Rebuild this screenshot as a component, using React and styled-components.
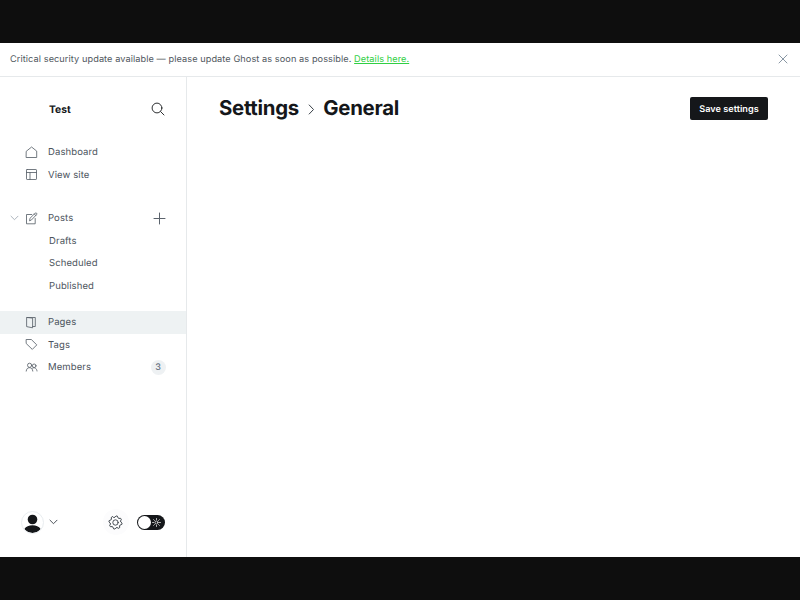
import React from 'react';
import styled, { createGlobalStyle } from 'styled-components';

const GlobalStyle = createGlobalStyle`
  * { box-sizing: border-box; }
  body { margin: 0; background: #0e0e0e; font-family: Inter, sans-serif; text-rendering: geometricPrecision; }
  svg { display: block; fill: none; stroke: currentColor; stroke-linecap: round; stroke-linejoin: round; flex: none; }
`;

const Screen = styled.div`
  height: 600px;
  padding: 43px 0;
  background: #0e0e0e;
`;
const Window = styled.div`
  height: 514px;
  display: flex;
  flex-direction: column;
  background: #fff;
  color: #15171a;
`;
const Banner = styled.div`
  height: 34px;
  flex: none;
  display: flex;
  align-items: center;
  justify-content: space-between;
  padding: 0 12px 1px 10px;
  border-bottom: 1px solid #e6e9eb;
  font-size: 9.2px;
  letter-spacing: 0.07px;
  color: #515860;
  white-space: nowrap;
`;
const BannerText = styled.span`
  padding-top: 1px;
`;
const BannerLink = styled.a`
  color: #30cf43;
  text-decoration: underline;
`;
const CloseButton = styled.span`
  color: #7c8b9a;
`;
const Body = styled.div`
  flex: 1;
  display: flex;
  min-height: 0;
`;
const Sidebar = styled.nav`
  width: 187px;
  flex: none;
  display: flex;
  flex-direction: column;
  border-right: 1px solid #e6e9eb;
  padding-bottom: 22px;
`;
const SiteHeader = styled.div`
  height: 64px;
  display: flex;
  align-items: center;
  justify-content: space-between;
  padding: 0 21px 0 49px;
  font-size: 10.3px;
  font-weight: 700;
`;
const SiteName = styled.span`
  padding-top: 2px;
`;
const Group = styled.div`
  margin-bottom: ${(p) => p.$gap}px;
`;
const Row = styled.div`
  height: 22.5px;
  display: flex;
  align-items: center;
  padding: 0 20.5px 0 ${(p) => (p.$nested ? 49 : 10)}px;
  font-size: 9.5px;
  letter-spacing: 0.1px;
  color: #4c545d;
  background: ${(p) => (p.$active ? '#eef2f3' : 'transparent')};
`;
const Expander = styled.span`
  width: 15px;
  color: #a4adb6;
`;
const RowIcon = styled.span`
  width: 23px;
  color: #5b636c;
`;
const Label = styled.span`
  flex: 1;
  padding-top: 1px;
`;
const Count = styled.span`
  width: 15px;
  height: 15px;
  border-radius: 50%;
  display: grid;
  place-items: center;
  padding-top: 1px;
  background: #eef1f3;
  color: #657080;
  font-size: 9px;
  font-weight: 500;
  letter-spacing: 0;
`;
const AddIcon = styled.span`
  color: #5b636c;
`;
const Footer = styled.div`
  margin-top: auto;
  height: 26px;
  display: flex;
  align-items: center;
  padding: 0 21px;
  color: #394047;
`;
const Avatar = styled.span`
  width: 23px;
  height: 23px;
  border: 1px solid #e9edf0;
  border-radius: 50%;
  overflow: hidden;
  margin-right: 5px;
`;
const GearButton = styled.span`
  width: 26px;
  height: 26px;
  margin-left: auto;
  margin-right: 8px;
  display: grid;
  place-items: center;
  border-radius: 50%;
  background: #fcfcfd;
`;
const Toggle = styled.span`
  width: 28.5px;
  height: 15px;
  border-radius: 8px;
  background: #15171a;
  color: #fff;
  display: flex;
  align-items: center;
  justify-content: space-between;
  padding: 0 4px 0 1px;
`;
const Knob = styled.span`
  width: 13px;
  height: 13px;
  border-radius: 50%;
  background: #fff;
`;
const Main = styled.main`
  flex: 1;
`;
const PageHeader = styled.header`
  height: 63px;
  display: flex;
  align-items: center;
  justify-content: space-between;
  padding: 0 32px;
`;
const Title = styled.h1`
  margin: 0;
  display: flex;
  align-items: center;
  font-size: 20.4px;
  font-weight: 700;
  letter-spacing: -0.3px;
  line-height: 26px;
  padding-bottom: 1px;
`;
const Separator = styled.span`
  width: 24.5px;
  display: grid;
  place-items: center;
  padding-top: 3px;
  color: #394047;
`;
const SaveButton = styled.button`
  width: 78px;
  height: 23px;
  border: 0;
  border-radius: 2px;
  padding: 1px 0 0;
  background: #15171a;
  color: #fff;
  font: 600 9.1px Inter, sans-serif;
  letter-spacing: 0.03px;
  text-rendering: inherit;
  white-space: nowrap;
`;

const icons = {
  home: <path d="M1.5 5.1 6.6 1l5.1 4.1v6.4H1.5Z" />,
  site: <><rect x="1.5" y="1.5" width="10" height="10" rx=".6" /><path d="M1.5 4.5h10M5 4.5v7" /></>,
  posts: <><path d="M6.8 2.5H1.5v9.3h8.7V6.5" /><path d="m4.6 8.4.5-2.2L10.2 1.1q.9-.5 1.4.1.6.6 0 1.4L6.6 7.8ZM9.3 2l1.5 1.5" /></>,
  pages: <><path d="M2 1.5 7.6 2.1v9.7L2 10.7Z" /><path d="M2 1.5h8.3v9H7.6" /></>,
  tags: <path d="M1.5 1.5h4.8l5.5 5.4-4.5 4.5L1.5 5.8Z" />,
  members: <><circle cx="4.6" cy="4.3" r="2.1" /><circle cx="9.2" cy="4.8" r="1.8" /><path d="M1.2 10.1c.2-2.2 1.4-3.4 3.3-3.4s3.1 1.2 3.3 3.4M7.5 7.1c2-1.2 4.2.1 4.5 2.9" /></>,
};

const Glyph = ({ name }) => (
  <svg width="13" height="13" viewBox="0 0 13 13" strokeWidth=".85">{icons[name]}</svg>
);
const Chevron = ({ width = 9 }) => (
  <svg width={width} height="6" viewBox="0 0 9 6" strokeWidth=".9"><path d="M1 1.2 4.5 4.7 8 1.2" /></svg>
);
const gearPoints = Array.from({ length: 32 }, (_, i) => {
  const angle = ((i - 1.5) * Math.PI) / 16;
  const radius = i % 4 < 2 ? 5.3 : 6.6;
  return `${(7.5 + radius * Math.sin(angle + Math.PI / 16)).toFixed(2)},${(7.5 - radius * Math.cos(angle + Math.PI / 16)).toFixed(2)}`;
}).join(' ');
const Gear = () => (
  <svg width="15" height="15" viewBox="0 0 15 15" strokeWidth=".9">
    <polygon points={gearPoints} transform="rotate(-11.25 7.5 7.5)" /><circle cx="7.5" cy="7.5" r="2.7" />
  </svg>
);
const Sun = () => (
  <svg width="9" height="9" viewBox="0 0 9 9" strokeWidth=".7">
    <circle cx="4.5" cy="4.5" r="1.5" />
    <path d="M4.5.5v1.2M4.5 7.3v1.2M.5 4.5h1.2M7.3 4.5h1.2M1.6 1.6l.9.9M6.5 6.5l.9.9M7.4 1.6l-.9.9M2.5 6.5l-.9.9" />
  </svg>
);

const NavItem = ({ icon, label, active, expander, children }) => (
  <Row $active={active}>
    <Expander>{expander && <Chevron />}</Expander>
    <RowIcon><Glyph name={icon} /></RowIcon>
    <Label>{label}</Label>
    {children}
  </Row>
);

export default function App() {
  return (
    <Screen>
      <GlobalStyle />
      <Window>
        <Banner>
          <BannerText>
            Critical security update available — please update Ghost as soon as possible. <BannerLink>Details here.</BannerLink>
          </BannerText>
          <CloseButton>
            <svg width="10" height="10" viewBox="0 0 10 10" strokeWidth=".9"><path d="m1 1 8 8M9 1 1 9" /></svg>
          </CloseButton>
        </Banner>
        <Body>
          <Sidebar>
            <SiteHeader>
              <SiteName>Test</SiteName>
              <svg width="14" height="14" viewBox="0 0 14 14" strokeWidth=".9"><circle cx="6" cy="6" r="4.9" /><path d="m9.7 9.7 3.3 3.3" /></svg>
            </SiteHeader>
            <Group $gap={21}>
              <NavItem icon="home" label="Dashboard" />
              <NavItem icon="site" label="View site" />
            </Group>
            <Group $gap={14}>
              <NavItem icon="posts" label="Posts" expander>
                <AddIcon>
                  <svg width="13" height="13" viewBox="0 0 13 13" strokeWidth="1"><path d="M6.5 1v11M1 6.5h11" /></svg>
                </AddIcon>
              </NavItem>
              {['Drafts', 'Scheduled', 'Published'].map((name) => (
                <Row key={name} $nested><Label>{name}</Label></Row>
              ))}
            </Group>
            <Group $gap={0}>
              <NavItem icon="pages" label="Pages" active />
              <NavItem icon="tags" label="Tags" />
              <NavItem icon="members" label="Members"><Count>3</Count></NavItem>
            </Group>
            <Footer>
              <Avatar>
                <svg width="21" height="21" viewBox="0 0 21 21">
                  <g fill="#15171a" stroke="none"><circle cx="10.5" cy="7.5" r="4.8" /><path d="M2.4 17.1C4 14.5 7 13.3 10.5 13.3s6.5 1.2 8.1 3.8C16.6 19.8 13.8 21 10.5 21s-6.1-1.2-8.1-3.9Z" /></g>
                </svg>
              </Avatar>
              <Chevron />
              <GearButton><Gear /></GearButton>
              <Toggle><Knob /><Sun /></Toggle>
            </Footer>
          </Sidebar>
          <Main>
            <PageHeader>
              <Title>
                Settings
                <Separator>
                  <svg width="7" height="11" viewBox="0 0 7 11" strokeWidth="1"><path d="m1.2 1 4.3 4.5L1.2 10" /></svg>
                </Separator>
                General
              </Title>
              <SaveButton>Save settings</SaveButton>
            </PageHeader>
          </Main>
        </Body>
      </Window>
    </Screen>
  );
}
